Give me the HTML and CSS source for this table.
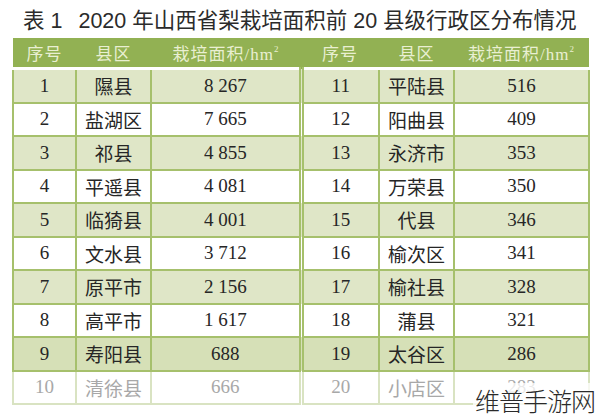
FILE: index.html
```html
<!DOCTYPE html>
<html lang="zh-CN">
<head>
<meta charset="utf-8">
<title>表1 2020年山西省梨栽培面积前20县级行政区分布情况</title>
<link rel="stylesheet" href="styles.css">
</head>
<body>
<div class="page">
  <h1 class="title">表 1<span class="gap"></span>2020 年山西省梨栽培面积前 20 县级行政区分布情况</h1>
  <table class="data">
    <colgroup>
      <col class="c-no"><col class="c-name"><col class="c-area">
      <col class="c-no2"><col class="c-name"><col class="c-area2">
    </colgroup>
    <thead>
      <tr>
        <th>序号</th><th>县区</th><th class="mid">栽培面积/hm<sup>2</sup></th>
        <th>序号</th><th>县区</th><th>栽培面积/hm<sup>2</sup></th>
      </tr>
    </thead>
    <tbody>
      <tr class="odd"><td>1</td><td>隰县</td><td class="mid">8 267</td><td>11</td><td>平陆县</td><td>516</td></tr>
      <tr><td>2</td><td>盐湖区</td><td class="mid">7 665</td><td>12</td><td>阳曲县</td><td>409</td></tr>
      <tr class="odd"><td>3</td><td>祁县</td><td class="mid">4 855</td><td>13</td><td>永济市</td><td>353</td></tr>
      <tr><td>4</td><td>平遥县</td><td class="mid">4 081</td><td>14</td><td>万荣县</td><td>350</td></tr>
      <tr class="odd"><td>5</td><td>临猗县</td><td class="mid">4 001</td><td>15</td><td>代县</td><td>346</td></tr>
      <tr><td>6</td><td>文水县</td><td class="mid">3 712</td><td>16</td><td>榆次区</td><td>341</td></tr>
      <tr class="odd"><td>7</td><td>原平市</td><td class="mid">2 156</td><td>17</td><td>榆社县</td><td>328</td></tr>
      <tr><td>8</td><td>高平市</td><td class="mid">1 617</td><td>18</td><td>蒲县</td><td>321</td></tr>
      <tr class="odd strong"><td>9</td><td>寿阳县</td><td class="mid">688</td><td>19</td><td>太谷区</td><td>286</td></tr>
      <tr class="faded"><td>10</td><td>清徐县</td><td class="mid">666</td><td>20</td><td>小店区</td><td>283</td></tr>
    </tbody>
  </table>
  <div class="watermark">维普手游网</div>
</div>
</body>
</html>
```
FILE: styles.css
```css
html, body {
  margin: 0;
  padding: 0;
  background: #ffffff;
}

.page {
  position: relative;
  width: 600px;
  height: 420px;
  overflow: hidden;
}

.title {
  margin: 0;
  padding: 8px 0 0 23px;
  height: 30px;
  font-family: "Liberation Sans", "Noto Sans CJK SC", sans-serif;
  font-weight: normal;
  font-size: 21.5px;
  line-height: 26px;
  color: #2b2b2b;
  white-space: nowrap;
}

.title .gap {
  display: inline-block;
  width: 16px;
}

.data {
  margin-left: 12px;
  width: 576px;
  table-layout: fixed;
  border-collapse: collapse;
  font-family: "Liberation Serif", "Noto Sans CJK SC", serif;
  color: #262626;
}

.c-no { width: 63px; }
.c-name { width: 75px; }
.c-area { width: 150px; }
.c-no2 { width: 78px; }
.c-area2 { width: 135px; }

.data th {
  height: 29px;
  padding: 0;
  background: #92b153;
  color: #e9efd2;
  font-weight: normal;
  font-size: 17px;
  text-align: center;
  border-bottom: 3px solid #ffffff;
  letter-spacing: 1px;
}

.data th sup {
  font-size: 9px;
  vertical-align: 8px;
  line-height: 0;
}

.data td {
  height: 31.5px;
  padding: 0;
  text-align: center;
  font-size: 19px;
  border: 2px solid #a6c06c;
}

.data td.mid {
  border-right: 5px double #a6c06c;
}

.data tr.odd td {
  background: #dfe6c7;
}

.data tr.strong td {
  background: #d6e0b7;
}

.data tr.faded td {
  color: #a8a8a8;
  border-color: #d9e3c2;
  background: #ffffff;
}

.data tr.faded td.mid {
  border-right: 5px double #d9e3c2;
}

.watermark {
  position: absolute;
  right: 3px;
  bottom: 3px;
  font-family: "Noto Sans CJK SC", sans-serif;
  font-weight: 300;
  font-size: 25px;
  line-height: 34px;
  letter-spacing: -1px;
  color: #2a2a2a;
  background: rgba(255, 255, 255, 0.75);
  padding: 0 2px;
}
```
